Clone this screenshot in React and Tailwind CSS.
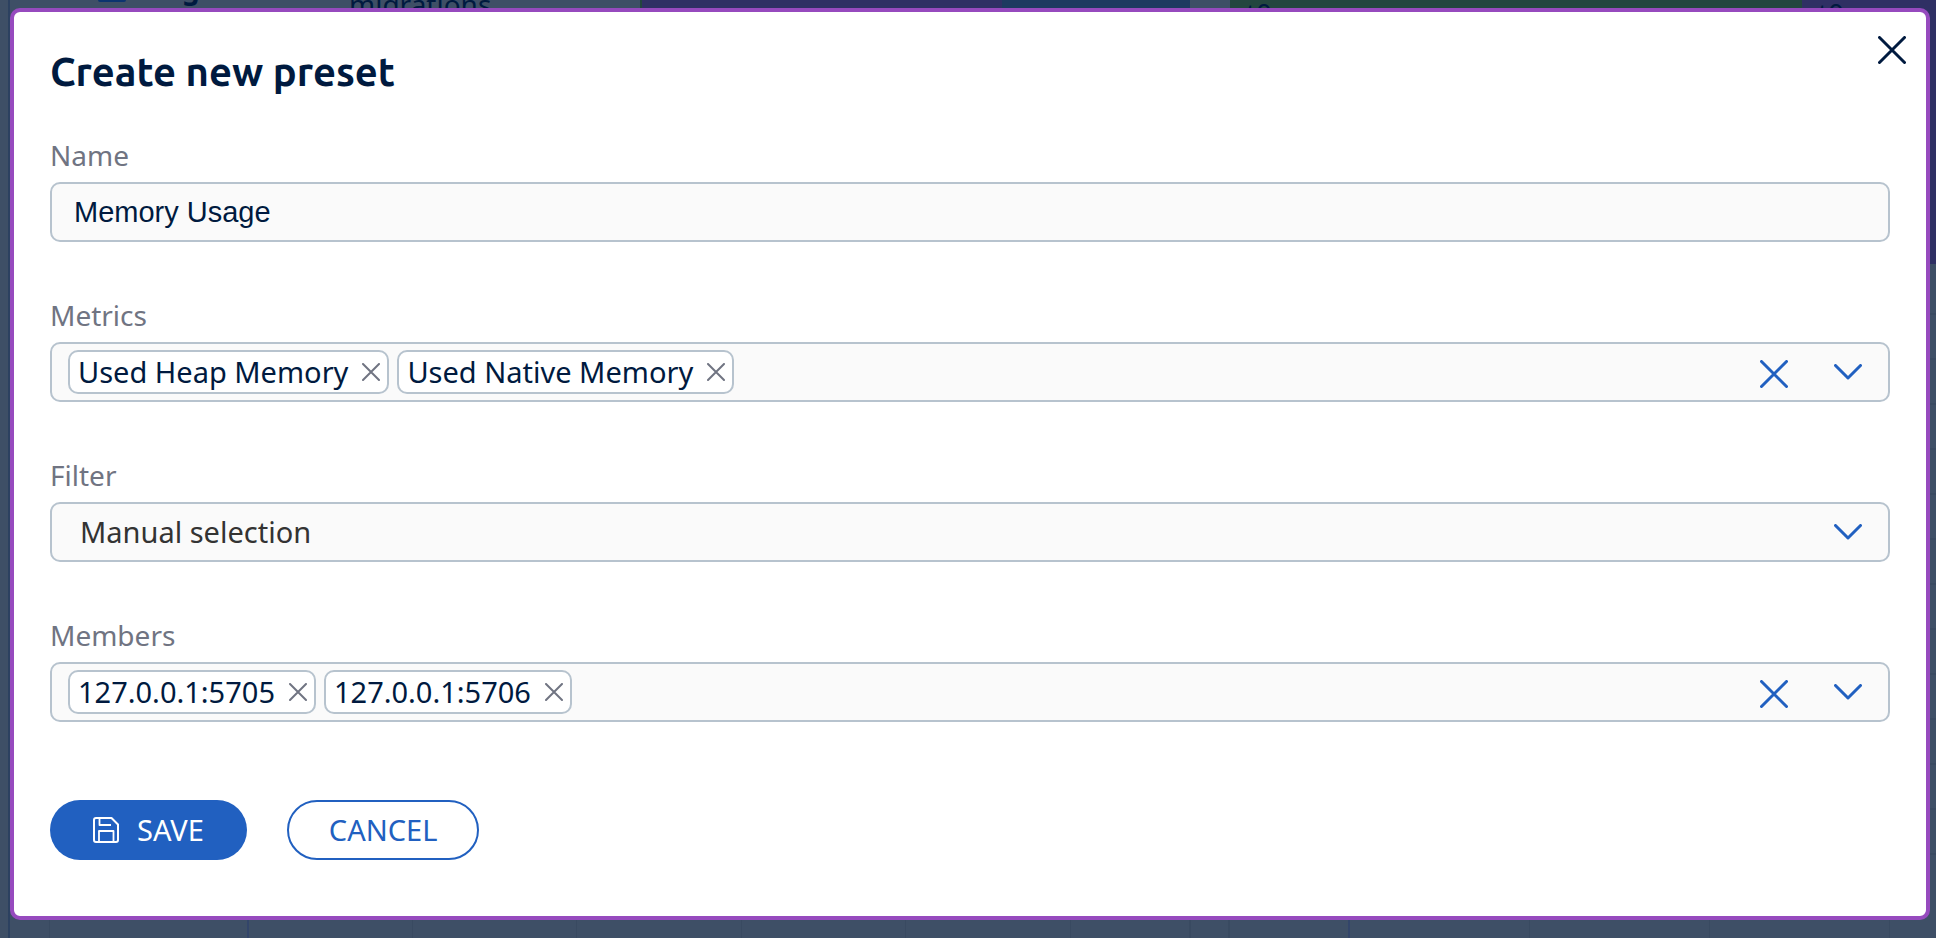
import { useState } from 'react'

const fieldBox =
  'flex h-[60px] w-full items-center rounded-[10px] border-2 border-[#b7c3ce] bg-[#fafafa]'

function CrossIcon({ className, weight = 3, size = 28 }) {
  const far = size - weight / 2
  const near = weight / 2
  return (
    <svg
      viewBox={`0 0 ${size} ${size}`}
      className={className}
      fill="none"
      stroke="currentColor"
      strokeWidth={weight}
      strokeLinecap="round"
      aria-hidden="true"
    >
      <path d={`M${near} ${near}L${far} ${far}M${far} ${near}L${near} ${far}`} />
    </svg>
  )
}

function ChevronIcon() {
  return (
    <svg
      viewBox="0 0 28 16"
      className="h-4 w-7 text-[#2160c0]"
      fill="none"
      stroke="currentColor"
      strokeWidth="3"
      strokeLinecap="round"
      strokeLinejoin="round"
      aria-hidden="true"
    >
      <path d="M1.5 1.5L14 14L26.5 1.5" />
    </svg>
  )
}

function SaveIcon() {
  return (
    <svg
      viewBox="0 0 26 26"
      className="size-[26px]"
      fill="none"
      stroke="currentColor"
      strokeWidth="2"
      strokeLinejoin="round"
      aria-hidden="true"
    >
      <path d="M3 1H18.5L25 7.5V23a2 2 0 0 1-2 2H3a2 2 0 0 1-2-2V3a2 2 0 0 1 2-2Z" />
      <path d="M6.5 1V8H18" strokeWidth="1.8" />
      <path d="M6 25V14H20.5V25" strokeWidth="1.8" />
    </svg>
  )
}

function Label({ htmlFor, children }) {
  return (
    <label htmlFor={htmlFor} className="mb-[7px] block text-[28px] leading-10 text-[#707482]">
      {children}
    </label>
  )
}

function MultiSelect({ id, label, initial }) {
  const [items, setItems] = useState(initial)
  return (
    <div>
      <Label htmlFor={id}>{label}</Label>
      <div className={`${fieldBox} pl-4 pr-6`}>
        <ul className="flex gap-2">
          {items.map((item) => (
            <li
              key={item}
              className="flex h-11 items-center whitespace-nowrap rounded-[10px] border-2 border-[#b7c3ce] bg-white pl-2 pr-[7px] text-[29px] leading-[38px] text-[#001a3f]"
            >
              {item}
              <button
                type="button"
                aria-label={`Remove ${item}`}
                className="ml-3.5 text-[#707482]"
                onClick={() => setItems(items.filter((other) => other !== item))}
              >
                <CrossIcon className="size-[18px]" size={18} weight={2} />
              </button>
            </li>
          ))}
        </ul>
        <input id={id} type="text" className="min-w-0 flex-1 bg-transparent px-2 text-[29px] outline-none" />
        <button
          type="button"
          aria-label={`Clear ${label}`}
          className="mt-1 text-[#2160c0]"
          onClick={() => setItems([])}
        >
          <CrossIcon className="size-7" />
        </button>
        <button type="button" aria-label={`Open ${label}`} className="ml-[46px] mr-0.5">
          <ChevronIcon />
        </button>
      </div>
    </div>
  )
}

const gridRows = Array.from({ length: 13 }, (_, index) => index)

function Backdrop() {
  return (
    <div
      aria-hidden="true"
      className="absolute inset-0 flex overflow-hidden bg-[#3e4f66] text-[28px] text-[#001a3f]"
    >
      <div className="w-2.5 border-r-2 border-[#2c4160]" />
      <div className="flex flex-1 flex-col">
        <div className="flex h-[264px]">
          <div className="flex w-[630px] items-start pl-[88px]">
            <span className="h-0.5 w-7 rounded-b bg-[#0c3470]" />
            <span className="-mt-8 ml-14 w-5 font-bold leading-10">g</span>
            <span className="-mt-4 ml-[147px] leading-10">migrations</span>
          </div>
          <div className="w-[362px] border-l-2 border-[#23463f] bg-[#2f3064]" />
          <div className="w-[188px] bg-[#1d3a60]" />
          <div className="w-10" />
          <div className="w-[572px] bg-[#23463f] pl-4 leading-[26px]">t0</div>
          <div className="flex-1 bg-[#2f3064] pl-4 leading-[26px]">t0</div>
        </div>
        <div className="flex flex-1 flex-col items-end pt-1.5">
          {gridRows.map((row) => (
            <div key={row} className="h-[45px] w-1.5 border-b-2 border-[#394a61]" />
          ))}
        </div>
        <div className="flex h-6">
          <div className="w-10 border-r border-[#394a61]" />
          <div className="w-[199px] border-r-2 border-[#33456a]" />
          <div className="w-[164px] border-r border-[#394a61]" />
          <div className="w-[164px] border-r border-[#394a61]" />
          <div className="w-[165px] border-r border-[#394a61]" />
          <div className="w-[164px] border-r border-[#394a61]" />
          <div className="w-[165px] border-r border-[#394a61]" />
          <div className="w-[120px] border-r-2 border-[#394a61]" />
          <div className="w-[39px] border-r-2 border-[#394a61]" />
          <div className="w-[120px] border-r-2 border-[#33456a]" />
          <div className="w-[180px] border-r border-[#394a61]" />
          <div className="w-[180px] border-r border-[#394a61]" />
          <div className="w-[180px] border-r border-[#394a61]" />
        </div>
      </div>
    </div>
  )
}

export default function App() {
  return (
    <div className="relative min-h-screen px-1.5 pb-[18px] pl-2.5 pt-2 font-['Noto_Sans','Open_Sans',sans-serif]">
      <Backdrop />
      <div
        role="dialog"
        aria-modal="true"
        aria-labelledby="dialog-title"
        className="relative rounded-[10px] border-4 border-[#964abe] bg-white px-9 pb-14 pt-8"
      >
        <button type="button" aria-label="Close" className="absolute right-5 top-6 text-[#001a3f]">
          <CrossIcon className="size-7" />
        </button>
        <h2
          id="dialog-title"
          className="font-['Ubuntu','Noto_Sans',sans-serif] text-[40px] font-semibold leading-[56px] text-[#001a3f]"
        >
          Create new preset
        </h2>
        <form className="mt-[35px]" onSubmit={(event) => event.preventDefault()}>
          <div className="flex flex-col gap-[53px]">
            <div>
              <Label htmlFor="preset-name">Name</Label>
              <input
                id="preset-name"
                type="text"
                defaultValue="Memory Usage"
                className={`${fieldBox} px-[22px] font-['Liberation_Sans',Arial,sans-serif] text-[29px] text-[#001a3f] outline-none`}
              />
            </div>
            <MultiSelect
              id="preset-metrics"
              label="Metrics"
              initial={['Used Heap Memory', 'Used Native Memory']}
            />
            <div>
              <Label htmlFor="preset-filter">Filter</Label>
              <div className="grid items-center">
                <select
                  id="preset-filter"
                  className={`${fieldBox} col-start-1 row-start-1 appearance-none px-7 text-[29px] text-[#333333] outline-none`}
                >
                  <option>Manual selection</option>
                </select>
                <span className="pointer-events-none col-start-1 row-start-1 mr-7 justify-self-end">
                  <ChevronIcon />
                </span>
              </div>
            </div>
            <MultiSelect
              id="preset-members"
              label="Members"
              initial={['127.0.0.1:5705', '127.0.0.1:5706']}
            />
          </div>
          <div className="mt-[78px] flex gap-10 text-[29px]">
            <button
              type="submit"
              className="flex h-[60px] items-center gap-[18px] rounded-full bg-[#2160c0] px-[43px] text-white"
            >
              <SaveIcon />
              SAVE
            </button>
            <button
              type="button"
              className="h-[60px] rounded-full border-2 border-[#2160c0] bg-white px-10 text-[#2160c0]"
            >
              CANCEL
            </button>
          </div>
        </form>
      </div>
    </div>
  )
}
